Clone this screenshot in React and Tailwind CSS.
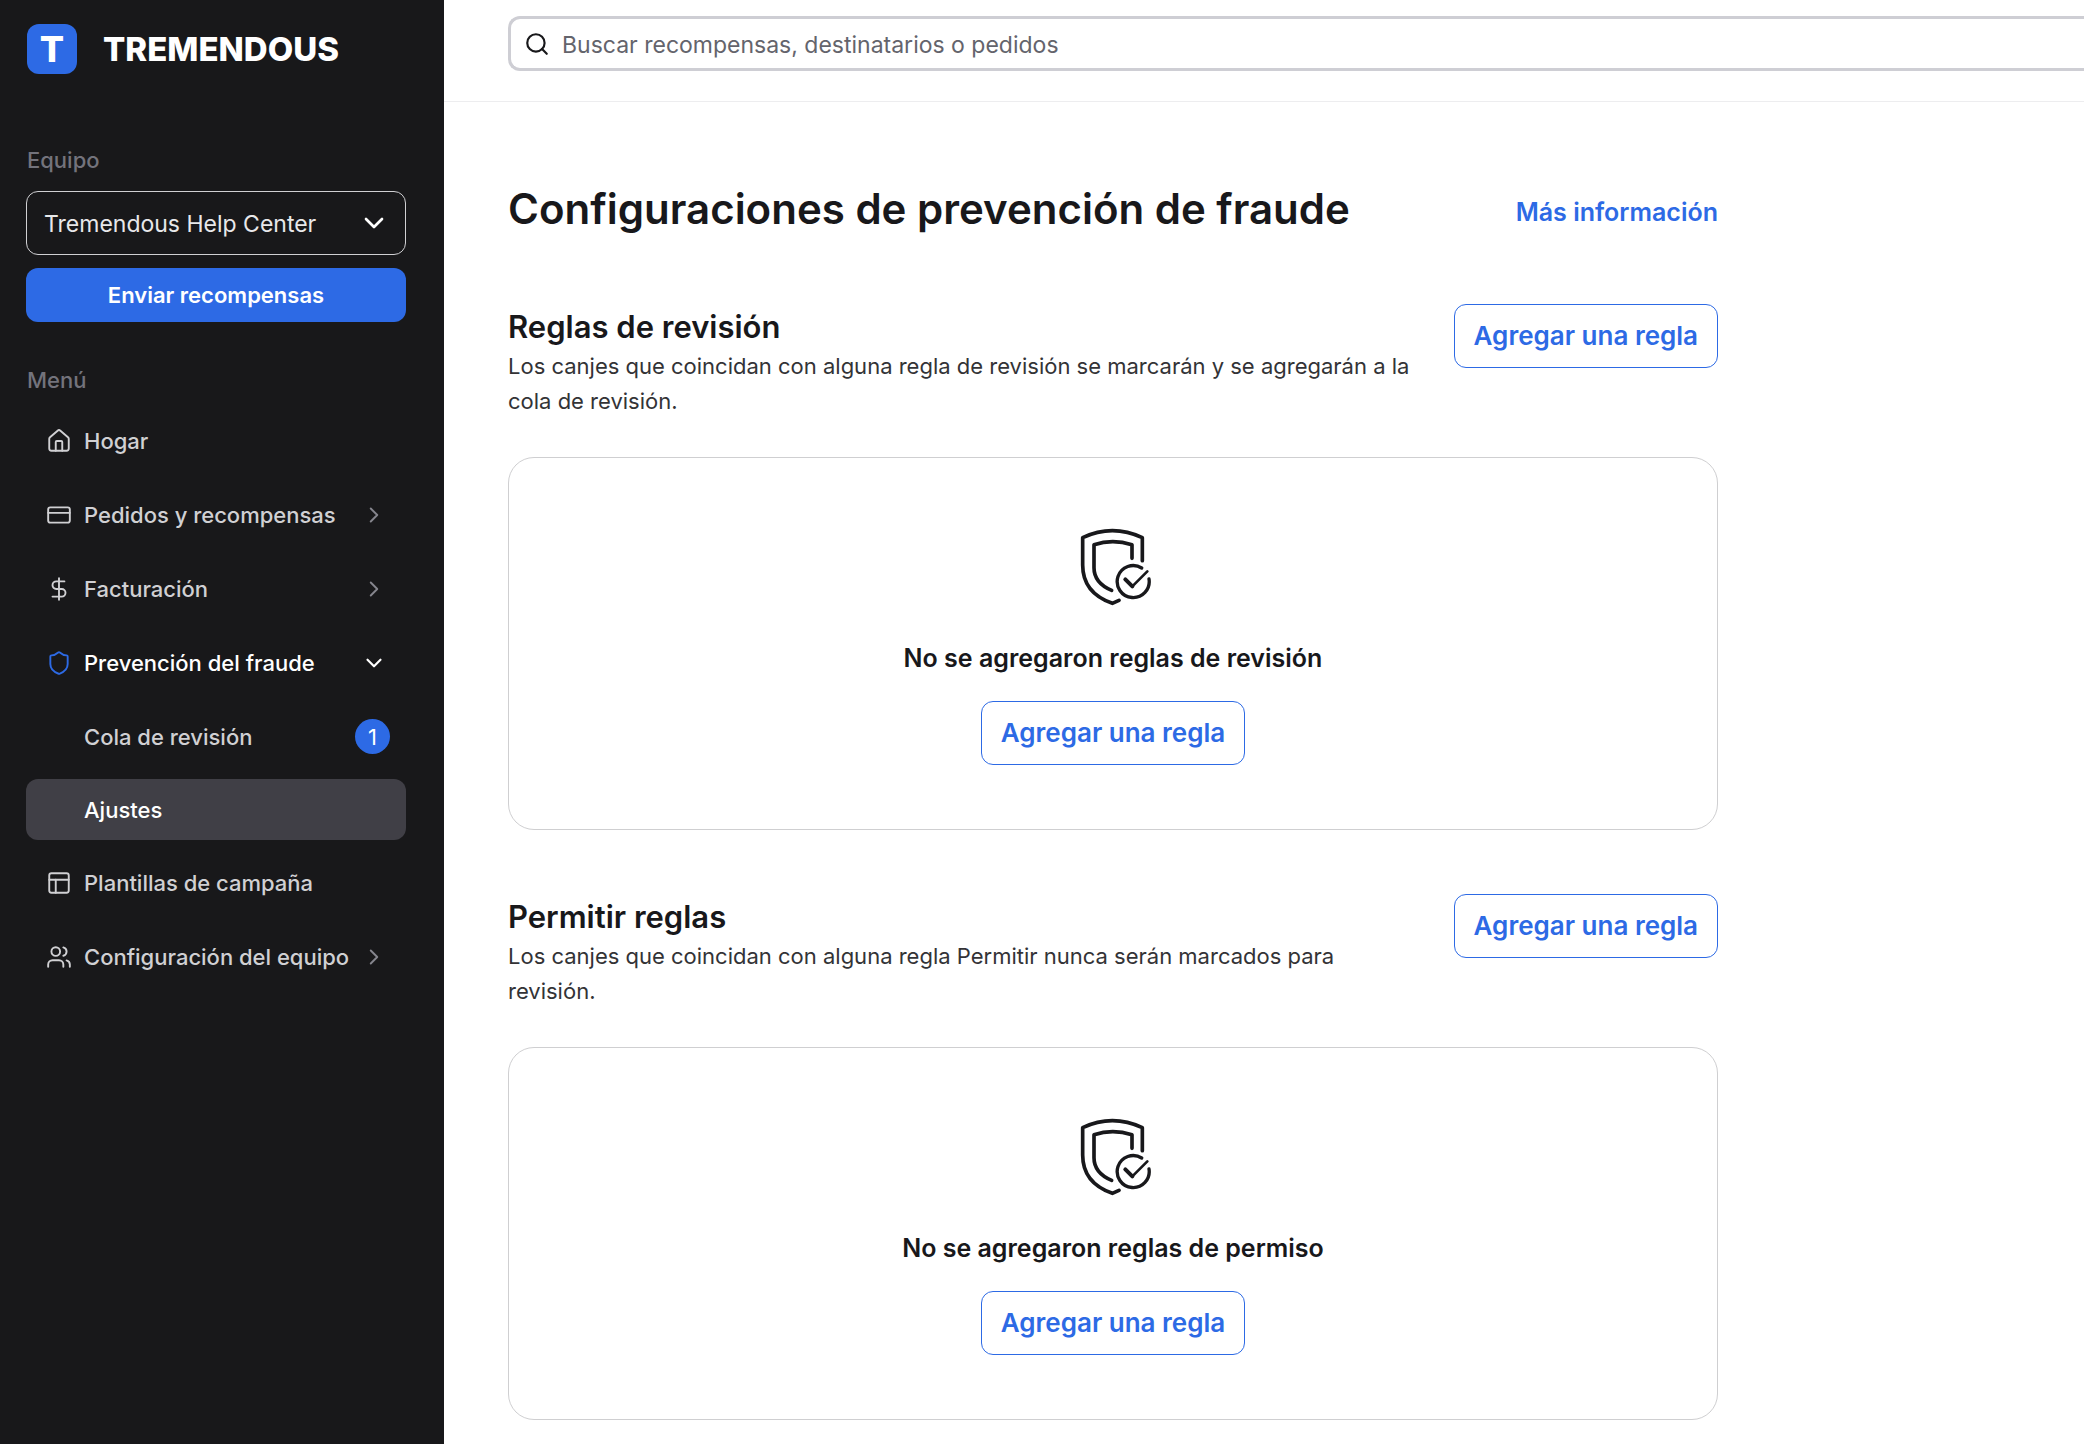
import { useState } from "react";
import { ChevronDown, ChevronRight, CreditCard, DollarSign, House, PanelsTopLeft, Search, Shield, Users } from "lucide-react";

const NAV_ITEMS = [
  { id: "home", label: "Hogar", Icon: House },
  { id: "orders", label: "Pedidos y recompensas", Icon: CreditCard, expandable: true },
  { id: "billing", label: "Facturación", Icon: DollarSign, expandable: true },
  {
    id: "fraud",
    label: "Prevención del fraude",
    Icon: Shield,
    expandable: true,
    open: true,
    children: [
      { id: "queue", label: "Cola de revisión", count: 1 },
      { id: "settings", label: "Ajustes", active: true },
    ],
  },
  { id: "templates", label: "Plantillas de campaña", Icon: PanelsTopLeft },
  { id: "team", label: "Configuración del equipo", Icon: Users, expandable: true },
];

const SECTIONS = [
  {
    id: "review",
    title: "Reglas de revisión",
    text: "Los canjes que coincidan con alguna regla de revisión se marcarán y se agregarán a la cola de revisión.",
    empty: "No se agregaron reglas de revisión",
  },
  {
    id: "allow",
    title: "Permitir reglas",
    text: "Los canjes que coincidan con alguna regla Permitir nunca serán marcados para revisión.",
    empty: "No se agregaron reglas de permiso",
  },
];

function ShieldCheckIcon() {
  return (
    <svg viewBox="42 84 234 234" className="size-[78px] text-[#18181b]" fill="none" stroke="currentColor" strokeWidth="12" strokeLinecap="round" strokeLinejoin="round" aria-hidden="true">
      <path d="M247 182V113Q157 71 68 113V195C68 255 100 290 157 310L177 301" strokeWidth="11" />
      <path d="M216 175V134Q158 116 102 134V203C102 237 122 257 155 271" strokeWidth="11" />
      <path d="M245 204A48 48 0 1 0 267 237" strokeWidth="10" />
      <path d="M196 238L217 259" />
      <path d="M217 259L262 214" strokeWidth="8" />
    </svg>
  );
}

function AddRuleButton() {
  return (
    <button type="button" className="h-16 shrink-0 rounded-xl border border-[#2d6ae5] bg-white px-[19px] text-[26px] leading-9 font-semibold text-[#2d6ae5]">
      Agregar una regla
    </button>
  );
}

function NavItem({ item }) {
  const { label, Icon, expandable, open, children } = item;
  return (
    <li>
      <a href="#" className={open ? "flex h-[62px] items-center pl-5 pr-[19px] text-white" : "flex h-[62px] items-center pl-5 pr-[19px] text-[#d0d0d3]"}>
        <Icon size={26} strokeWidth={1.75} className={open ? "shrink-0 text-[#2d6ae5]" : "shrink-0"} />
        <span className="ml-3 flex-1 whitespace-nowrap">{label}</span>
        {expandable && (open
          ? <ChevronDown size={26} strokeWidth={2} className="shrink-0" />
          : <ChevronRight size={26} strokeWidth={1.75} className="shrink-0 text-[#85858d]" />)}
      </a>
      {children ? (
        <ul className="mt-3 flex flex-col gap-3">
          {children.map((c) => (
            <li key={c.id}>
              <a href="#" className={c.active ? "flex h-[61px] items-center rounded-xl bg-[#403f46] pl-[58px] pr-4 text-white" : "flex h-[61px] items-center pl-[58px] pr-4 text-[#d0d0d3]"}>
                <span className="flex-1">{c.label}</span>
                {c.count ? <span className="grid size-[35px] place-items-center rounded-full bg-[#2d6ae5] font-normal text-white">{c.count}</span> : null}
              </a>
            </li>
          ))}
        </ul>
      ) : null}
    </li>
  );
}

function Sidebar() {
  const [team, setTeam] = useState("help");
  return (
    <aside className="w-[444px] shrink-0 bg-[#18181a] pt-6 pr-[38px] pl-[26px] text-[22px] leading-8 font-medium">
      <a href="#" className="flex h-[50px] items-center pl-px text-white">
        <span className="grid size-[50px] place-items-center rounded-xl bg-[#2d6ae5] text-[36px] leading-9 font-extrabold">T</span>
        <span className="ml-[26px] text-[33px] leading-9 font-extrabold">TREMENDOUS</span>
      </a>

      <label htmlFor="team" className="mt-[70px] block pl-px text-[#73737c]">Equipo</label>
      <div className="relative mt-[15px]">
        <select id="team" value={team} onChange={(e) => setTeam(e.target.value)} className="h-16 w-full appearance-none rounded-xl border border-[#d0d0d3] bg-transparent pt-0.5 pr-14 pl-[17px] text-[23px] font-normal text-[#e8e8ea]">
          <option value="help">Tremendous Help Center</option>
        </select>
        <ChevronDown size={32} strokeWidth={2} className="pointer-events-none absolute top-4 right-4 text-white" />
      </div>
      <button type="button" className="mt-[13px] h-[54px] w-full rounded-xl bg-[#2d6ae5] font-semibold text-white">Enviar recompensas</button>

      <h2 className="mt-[42px] pl-px text-[#73737c]">Menú</h2>
      <nav className="mt-[14px]">
        <ul className="flex flex-col gap-3">
          {NAV_ITEMS.map((item) => <NavItem key={item.id} item={item} />)}
        </ul>
      </nav>
    </aside>
  );
}

function RuleSection({ section }) {
  return (
    <section>
      <div className="flex items-start justify-between gap-10">
        <div>
          <h2 className="text-[31px] leading-[45px] font-semibold">{section.title}</h2>
          <p className="text-[22px] leading-[35px] text-[#333336]">{section.text}</p>
        </div>
        <AddRuleButton />
      </div>
      <div className="mt-[38px] flex flex-col items-center rounded-[26px] border border-[#cfcfd1] pt-[70px] pb-16">
        <ShieldCheckIcon />
        <p className="mt-[34px] mb-[25px] text-[25px] leading-9 font-semibold">{section.empty}</p>
        <AddRuleButton />
      </div>
    </section>
  );
}

export default function App() {
  return (
    <div className="flex min-h-screen bg-white font-['Inter',sans-serif] text-[#18181b]">
      <Sidebar />
      <div className="min-w-0 flex-1">
        <header className="border-b border-[#ededef] pt-4 pb-[30px] pl-16">
          <div className="relative">
            <Search size={26} strokeWidth={2} className="pointer-events-none absolute top-[15px] left-4" />
            <input type="search" aria-label="Buscar" placeholder="Buscar recompensas, destinatarios o pedidos" className="block h-[55px] w-full rounded-l-xl border-[3px] border-r-0 border-[#ceced4] pt-0.5 pl-[51px] text-[23px] placeholder:text-[#64646c]" />
          </div>
        </header>
        <main className="max-w-[1274px] pt-[79px] pb-[22px] pl-16">
          <div className="flex items-center justify-between">
            <h1 className="text-[42px] leading-[56px] font-semibold">Configuraciones de prevención de fraude</h1>
            <a href="#" className="pt-1.5 text-[25px] leading-9 font-semibold text-[#2d6ae5]">Más información</a>
          </div>
          <div className="mt-[67px] flex flex-col gap-16">
            {SECTIONS.map((s) => <RuleSection key={s.id} section={s} />)}
          </div>
        </main>
      </div>
    </div>
  );
}
